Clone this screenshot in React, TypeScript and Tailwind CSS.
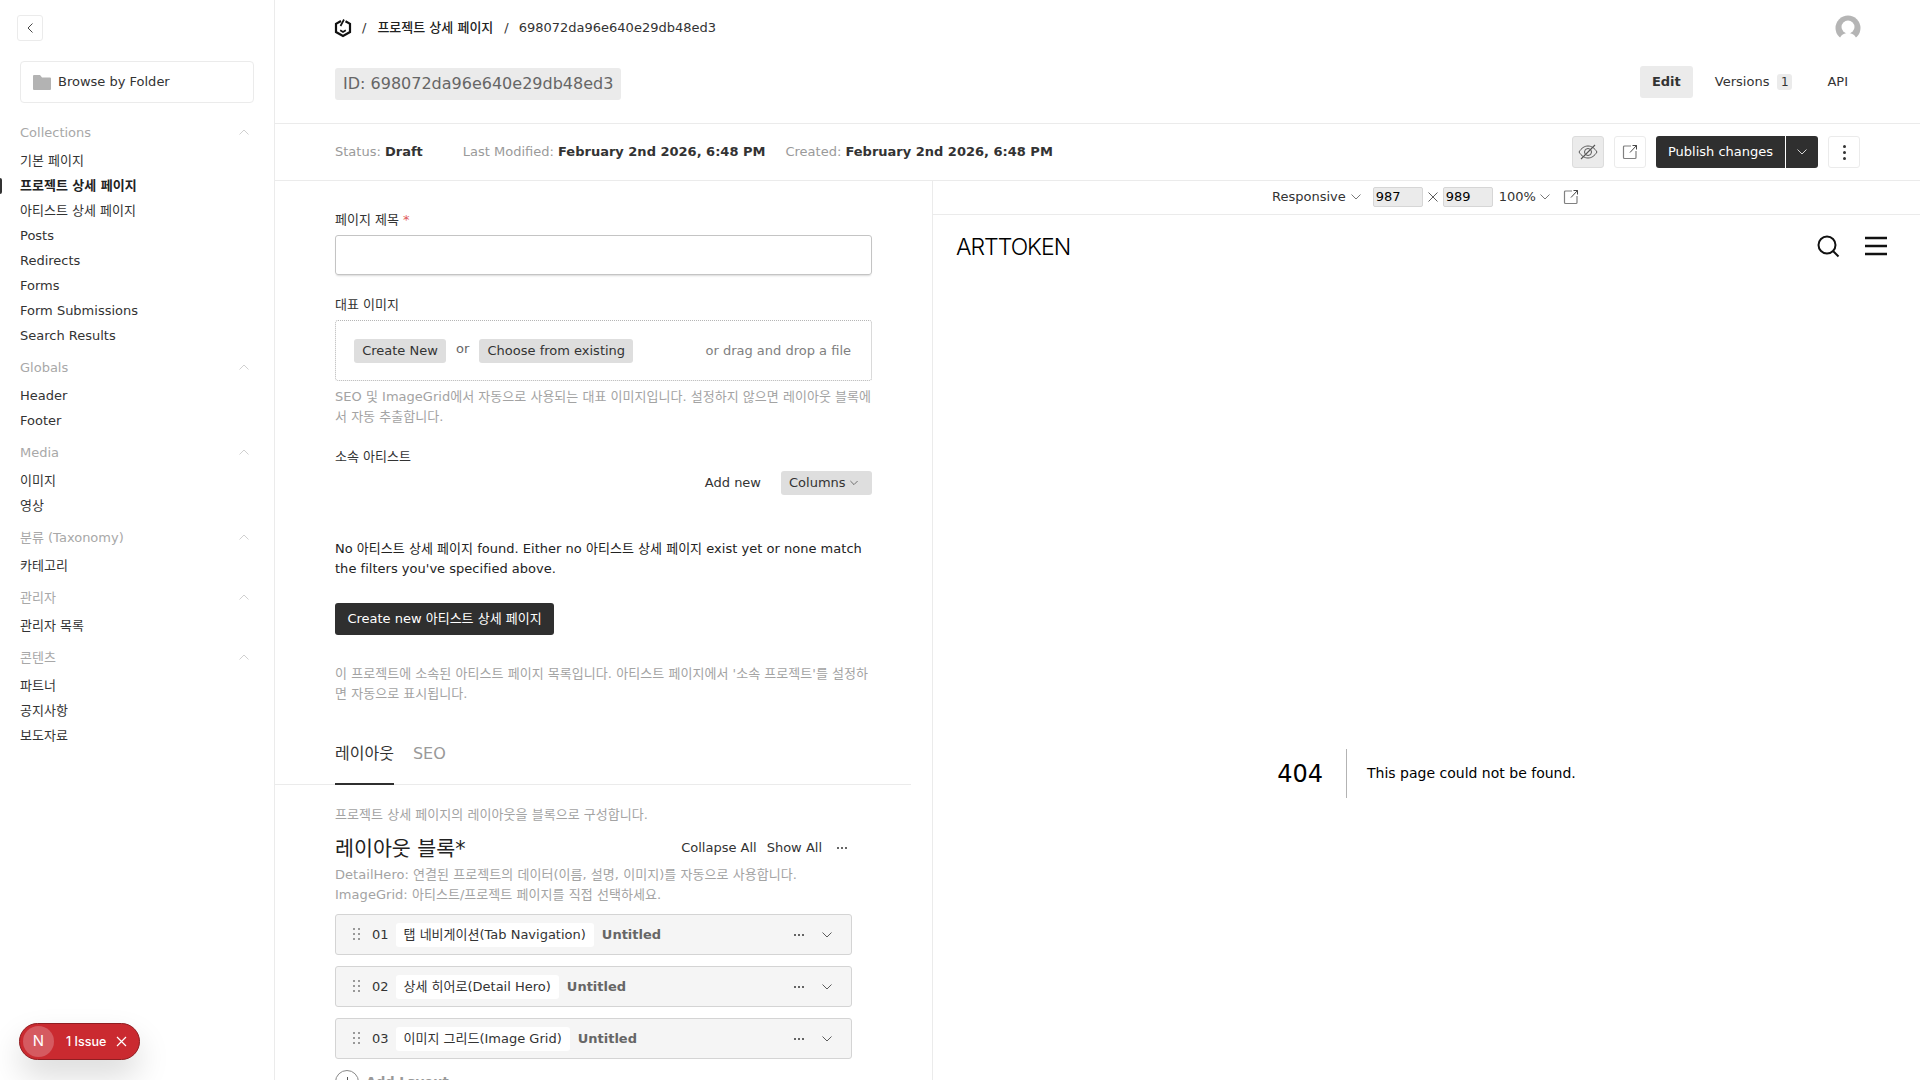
import React from "react";

const collections = [
  {
    title: "Collections",
    items: ["기본 페이지", "프로젝트 상세 페이지", "아티스트 상세 페이지", "Posts", "Redirects", "Forms", "Form Submissions", "Search Results"],
  },
  { title: "Globals", items: ["Header", "Footer"] },
  { title: "Media", items: ["이미지", "영상"] },
  { title: "분류 (Taxonomy)", items: ["카테고리"] },
  { title: "관리자", items: ["관리자 목록"] },
  { title: "콘텐츠", items: ["파트너", "공지사항", "보도자료"] },
];

const blocks = [
  { num: "01", name: "탭 네비게이션(Tab Navigation)" },
  { num: "02", name: "상세 히어로(Detail Hero)" },
  { num: "03", name: "이미지 그리드(Image Grid)" },
];

function Chevron({ up, className }: { up?: boolean; className?: string }) {
  return (
    <svg width="10" height="6" viewBox="0 0 10 6" fill="none" stroke="currentColor" strokeWidth="0.8" className={className}>
      <path d={up ? "M0.5 5.5 5 1l4.5 4.5" : "M0.5 0.5 5 5l4.5-4.5"} />
    </svg>
  );
}

function ExternalIcon() {
  return (
    <svg width="16" height="16" viewBox="0 0 16 16" fill="none" stroke="#808080" strokeWidth="1.2">
      <path d="M9 2H2.5a1 1 0 0 0-1 1v10.500a1 1 0 0 0 1 1H13a1 1 0 0 0 1-1V7" />
      <path d="M8 8.500 14.500 1.500M10.500 1.500h4v4" stroke="#333" strokeWidth="0.9" />
    </svg>
  );
}

function Dots() {
  return (
    <span className="flex gap-[2px]">
      <i className="w-[2px] h-[2px] bg-[#333] rounded-full" />
      <i className="w-[2px] h-[2px] bg-[#333] rounded-full" />
      <i className="w-[2px] h-[2px] bg-[#333] rounded-full" />
    </span>
  );
}

function Sidebar() {
  return (
    <aside className="relative w-[275px] shrink-0 h-full border-r border-[#ebebeb] pl-5 pr-5">
      <button className="absolute left-[17px] top-[15px] w-[26px] h-[26px] border border-[#ebebeb] rounded-[3px] flex items-center justify-center text-[#333]">
        <svg width="6" height="10" viewBox="0 0 6 10" fill="none" stroke="currentColor" strokeWidth="0.9">
          <path d="M5.500 0.500 1 5l4.500 4.500" />
        </svg>
      </button>
      <div className="mt-[61px] h-[42px] w-[234px] border border-[#ebebeb] rounded-[4px] flex items-center pl-3 gap-[7px] text-[#333]">
        <svg width="18" height="15" viewBox="0 0 18 15" fill="#b3b3b3">
          <path d="M1 0h6l2 2.500h8a1 1 0 0 1 1 1V14a1 1 0 0 1-1 1H1a1 1 0 0 1-1-1V1a1 1 0 0 1 1-1z" />
        </svg>
        Browse by Folder
      </div>
      <nav className="mt-[17px]">
        {collections.map((group) => (
          <div key={group.title} className="mb-[7px]">
            <div className="h-[25px] flex items-center justify-between pr-[5px] text-[#a8a8a8]">
              <span>{group.title}</span>
              <Chevron up className="text-[#c4c4c4] -mt-[1px]" />
            </div>
            <div className="mt-[3px]">
              {group.items.map((item) => (
                <div
                  key={item}
                  className={
                    item === "프로젝트 상세 페이지"
                      ? "relative h-[25px] flex items-center font-bold text-[#222]"
                      : "h-[25px] flex items-center text-[#333]"
                  }
                >
                  {item}
                  {item === "프로젝트 상세 페이지" && (
                    <span className="absolute -left-5 top-[5px] w-[2px] h-[16px] bg-[#333] rounded-r" />
                  )}
                </div>
              ))}
            </div>
          </div>
        ))}
      </nav>
      <div className="absolute left-[19px] top-[1023px] w-[121px] h-[37px] rounded-full bg-[#ca2a30] border border-[#8f1e22] shadow-[0_16px_32px_rgba(0,0,0,0.15)] flex items-center pl-[3px] text-white font-['Inter',sans-serif] text-[12.5px] font-medium">
        <span className="w-[31px] h-[31px] rounded-full bg-[#d55a60] flex items-center justify-center text-[15px] font-normal">N</span>
        <span className="ml-[12px] mt-[1px]">1 Issue</span>
        <svg width="11" height="11" viewBox="0 0 11 11" stroke="white" strokeWidth="1.200" className="ml-[10px]">
          <path d="M1 1l9 9M10 1l-9 9" />
        </svg>
      </div>
    </aside>
  );
}

function Header() {
  return (
    <header className="h-[124px] shrink-0 border-b border-[#ebebeb] relative">
      <div className="flex items-center pl-[60px] pr-[60px] h-[56px] text-[#333]">
        <svg width="18" height="20" viewBox="0 0 18 20" fill="none" stroke="#111" strokeWidth="2.200" className="-ml-[1px]">
          <path d="M7 3 2 5.800V14l7 4 7-4V5.800L11.500 3.200" />
          <path d="M6.500 8 10 1.500M6.200 12.300 9 14l2.800-1.700" strokeWidth="1.700" />
        </svg>
        <span className="ml-[10px]">/</span>
        <span className="ml-[11px] font-medium text-[#222]">프로젝트 상세 페이지</span>
        <span className="ml-[11px]">/</span>
        <span className="ml-[10px]">698072da96e640e29db48ed3</span>
        <svg width="26" height="26" viewBox="0 0 26 26" className="ml-auto -mr-[1px]">
          <circle cx="13" cy="13" r="12.500" fill="#b5b5b5" />
          <circle cx="13" cy="12" r="6.500" fill="white" />
          <path d="M4 26c1-6 5-8 9-8s8 2 9 8z" fill="white" />
        </svg>
      </div>
      <div className="flex items-start pl-[60px] pr-[60px] pt-[12px]">
        <div className="h-[32px] w-[286px] rounded-[3px] bg-[#ebebeb] text-[#666] text-[16px] flex items-center pl-2 whitespace-nowrap">
          ID: 698072da96e640e29db48ed3
        </div>
        <div className="ml-auto flex items-center h-[32px] -mt-[2px] text-[#333]">
          <span className="h-[32px] w-[53px] rounded-[3px] bg-[#ebebeb] font-bold flex items-center justify-center">Edit</span>
          <span className="ml-[22px]">Versions</span>
          <span className="ml-[8px] w-[15px] h-[16px] rounded-[3px] bg-[#ebebeb] flex items-center justify-center text-[12px]">1</span>
          <span className="ml-[35px] mr-[12px]">API</span>
        </div>
      </div>
    </header>
  );
}

function StatusBar() {
  return (
    <div className="h-[57px] shrink-0 border-b border-[#ebebeb] flex items-center pl-[60px] pr-[60px] text-[#9a9a9a]">
      <span>
        Status: <b className="text-[#333]">Draft</b>
      </span>
      <span className="ml-[40px]">
        Last Modified: <b className="text-[#333]">February 2nd 2026, 6:48 PM</b>
      </span>
      <span className="ml-[20px]">
        Created: <b className="text-[#333]">February 2nd 2026, 6:48 PM</b>
      </span>
      <div className="ml-auto flex items-center">
        <span className="w-[32px] h-[32px] rounded-[3px] bg-[#ebebeb] border border-[#dcdcdc] flex items-center justify-center">
          <svg width="20" height="16" viewBox="0 0 20 16" fill="none" stroke="#555" strokeWidth="1">
            <path d="M1 8c2.500-4 5.500-6 9-6s6.500 2 9 6c-2.500 4-5.500 6-9 6s-6.500-2-9-6z" />
            <circle cx="10" cy="8" r="3.500" />
            <path d="M3 15 17 1" strokeWidth="1.100" />
          </svg>
        </span>
        <span className="ml-[10px] w-[32px] h-[32px] rounded-[3px] border border-[#ebebeb] flex items-center justify-center">
          <ExternalIcon />
        </span>
        <span className="ml-[10px] h-[32px] w-[129px] bg-[#2f2f2f] text-white rounded-l-[3px] flex items-center justify-center whitespace-nowrap">Publish changes</span>
        <span className="ml-[1px] h-[32px] w-[32px] bg-[#2f2f2f] text-white rounded-r-[3px] flex items-center justify-center">
          <Chevron />
        </span>
        <span className="ml-[10px] w-[32px] h-[32px] rounded-[3px] border border-[#ebebeb] flex flex-col gap-[3px] items-center justify-center">
          <i className="w-[3px] h-[3px] rounded-full bg-[#333]" />
          <i className="w-[3px] h-[3px] rounded-full bg-[#333]" />
          <i className="w-[3px] h-[3px] rounded-full bg-[#333]" />
        </span>
      </div>
    </div>
  );
}

function EditForm() {
  return (
    <div className="w-[658px] shrink-0 h-full border-r border-[#ebebeb] overflow-hidden">
      <div className="pl-[60px] w-[597px]">
        <div className="w-[537px]">
          <div className="pt-[29px] h-[54px] leading-5 text-[#333]">
            페이지 제목 <span className="text-[#e05a5a]">*</span>
          </div>
          <div className="h-[40px] border border-[#c4c4c4] rounded-[3px] shadow-[0_2px_2px_-1px_rgba(0,0,0,0.15)]" />

          <div className="mt-[20px] leading-5 text-[#333]">대표 이미지</div>
          <div className="mt-[5px] h-[61px] border border-dotted border-[#b5b5b5] rounded-[3px] flex items-center pl-[18px] pr-[20px]">
            <span className="h-[24px] w-[92px] rounded-[3px] bg-[#dedede] flex items-center justify-center text-[#333]">Create New</span>
            <span className="ml-[10px] mr-[10px] -mt-[4px] text-[#666]">or</span>
            <span className="h-[24px] w-[154px] rounded-[3px] bg-[#dedede] flex items-center justify-center text-[#333]">Choose from existing</span>
            <span className="ml-auto text-[#808080]">or drag and drop a file</span>
          </div>
          <p className="mt-[6px] leading-5 tracking-[0.02px] text-[#a3a3a3] h-[40px] break-all">
            SEO 및 ImageGrid에서 자동으로 사용되는 대표 이미지입니다. 설정하지 않으면 레이아웃 블록에서 자동 추출합니다.
          </p>

          <div className="mt-[20px] leading-5 text-[#333]">소속 아티스트</div>
          <div className="flex justify-end items-center h-[24px] mt-[4px] text-[#333]">
            <span>Add new</span>
            <span className="ml-[20px] w-[91px] h-[24px] rounded-[3px] bg-[#dedede] flex items-center pl-[8px] gap-[4px]">
              Columns <Chevron className="w-[8px]" />
            </span>
          </div>
          <p className="mt-[44px] leading-5 tracking-[0.02px] text-[#222]">
            No 아티스트 상세 페이지 found. Either no 아티스트 상세 페이지 exist yet or none match the filters you&apos;ve specified above.
          </p>
          <div className="mt-[24px] h-[32px] w-[219px] rounded-[3px] bg-[#2f2f2f] text-white flex items-center justify-center whitespace-nowrap">
            Create new 아티스트 상세 페이지
          </div>
          <p className="mt-[29px] leading-5 tracking-[0.04px] text-[#a3a3a3] break-all">
            이 프로젝트에 소속된 아티스트 페이지 목록입니다. 아티스트 페이지에서 &apos;소속 프로젝트&apos;를 설정하면 자동으로 표시됩니다.
          </p>
        </div>
      </div>

      <div className="mt-[30px] w-[636px] h-[51px] border-b border-[#ebebeb] pl-[60px] flex text-[16px]">
        <span className="h-[51px] border-b-2 border-[#2f2f2f] text-[#333] pt-[8px]">레이아웃</span>
        <span className="ml-[19px] text-[#999] pt-[8px]">SEO</span>
      </div>

      <div className="pl-[60px]">
        <p className="mt-[20px] leading-5 tracking-[0.04px] text-[#a3a3a3]">프로젝트 상세 페이지의 레이아웃을 블록으로 구성합니다.</p>
        <div className="w-[517px] flex items-center h-[30px] mt-[8px] text-[#333]">
          <span className="text-[20.6px] mt-[2px] text-[#222]">레이아웃 블록*</span>
          <span className="ml-auto">Collapse All</span>
          <span className="ml-[10px]">Show All</span>
          <span className="ml-[15px] mr-[5px]">
            <Dots />
          </span>
        </div>
        <p className="mt-[2px] leading-5 tracking-[0.04px] text-[#a3a3a3]">
          DetailHero: 연결된 프로젝트의 데이터(이름, 설명, 이미지)를 자동으로 사용합니다.
          <br />
          ImageGrid: 아티스트/프로젝트 페이지를 직접 선택하세요.
        </p>
        <div className="mt-[9px] w-[517px] flex flex-col gap-[11px]">
          {blocks.map((b) => (
            <div key={b.num} className="h-[41px] shrink-0 rounded-[3px] border border-[#d4d4d4] bg-[#f5f5f5] flex items-center pl-[17px] pr-[19px]">
              <svg width="8" height="13" viewBox="0 0 8 13" fill="#999" className="mr-[11px]">
                <rect x="0" y="0" width="2" height="2" />
                <rect x="5" y="0" width="2" height="2" />
                <rect x="0" y="5" width="2" height="2" />
                <rect x="5" y="5" width="2" height="2" />
                <rect x="0" y="10" width="2" height="2" />
                <rect x="5" y="10" width="2" height="2" />
              </svg>
              <span className="text-[#333]">{b.num}</span>
              <span className="ml-[7px] h-[24px] rounded-[3px] bg-white px-2 flex items-center text-[#333] whitespace-nowrap">{b.name}</span>
              <b className="ml-[8px] text-[#666]">Untitled</b>
              <span className="ml-auto">
                <Dots />
              </span>
              <Chevron className="ml-[18px] text-[#333]" />
            </div>
          ))}
        </div>
        <div className="mt-[11px] flex items-center gap-[7px] font-bold text-[#999]">
          <span className="w-[24px] h-[24px] shrink-0 rounded-full border border-[#888] flex items-center justify-center text-[#555]">
            <svg width="11" height="11" viewBox="0 0 11 11" stroke="currentColor" strokeWidth="1">
              <path d="M5.500 0v11M0 5.500h11" />
            </svg>
          </span>
          Add Layout
        </div>
      </div>
    </div>
  );
}

function Preview() {
  return (
    <div className="flex-1 min-w-0 h-full flex flex-col">
      <div className="h-[34px] shrink-0 border-b border-[#ebebeb] flex items-center pb-[2px] pl-[339px] text-[#333]">
        <span>Responsive</span>
        <Chevron className="ml-[5px] text-[#555]" />
        <span className="ml-[12px] w-[50px] h-[20px] bg-[#ebebeb] border border-[#d6d6d6] rounded-[2px] pl-[2px] text-black flex items-center">987</span>
        <svg width="10" height="10" viewBox="0 0 10 10" stroke="#333" strokeWidth="0.8" className="ml-[5px]">
          <path d="M0.500 0.500l9 9M9.500 0.500l-9 9" />
        </svg>
        <span className="ml-[5px] w-[50px] h-[20px] bg-[#ebebeb] border border-[#d6d6d6] rounded-[2px] pl-[2px] text-black flex items-center">989</span>
        <span className="ml-[6px]">100%</span>
        <Chevron className="ml-[4px] text-[#555]" />
        <span className="ml-[13px] flex">
          <ExternalIcon />
        </span>
      </div>
      <div className="h-[62px] shrink-0 flex items-center pl-[23px] pr-[33px]">
        <span className="font-['Inter',sans-serif] text-[23px] font-light tracking-[-1px] text-black mt-[3px]">ARTTOKEN</span>
        <svg width="24" height="24" viewBox="0 0 24 24" fill="none" stroke="#111" strokeWidth="2" className="ml-auto">
          <circle cx="11" cy="11" r="8.500" />
          <path d="M17 17l5.500 5.500" />
        </svg>
        <svg width="22" height="20" viewBox="0 0 22 20" stroke="#111" strokeWidth="2.500" className="ml-[25px]">
          <path d="M0 2h22M0 10h22M0 18h22" />
        </svg>
      </div>
      <div className="flex-1 flex items-center justify-center pt-[192px] text-black font-['DejaVu_Sans',sans-serif]">
        <div className="flex items-center -mt-[2px]">
          <span className="text-[24px] font-medium pr-[23px]">404</span>
          <span className="h-[49px] w-px bg-[#b3b3b3]" />
          <span className="pl-[20px] text-[14px]">This page could not be found.</span>
        </div>
      </div>
    </div>
  );
}

export default function App() {
  return (
    <div className="relative w-[1920px] h-[1080px] overflow-hidden bg-white flex font-['DejaVu_Sans','Noto_Sans_CJK_KR',sans-serif] text-[13px]">
      <Sidebar />
      <main className="flex-1 min-w-0 flex flex-col h-full">
        <Header />
        <StatusBar />
        <div className="flex flex-1 min-h-0">
          <EditForm />
          <Preview />
        </div>
      </main>
    </div>
  );
}
